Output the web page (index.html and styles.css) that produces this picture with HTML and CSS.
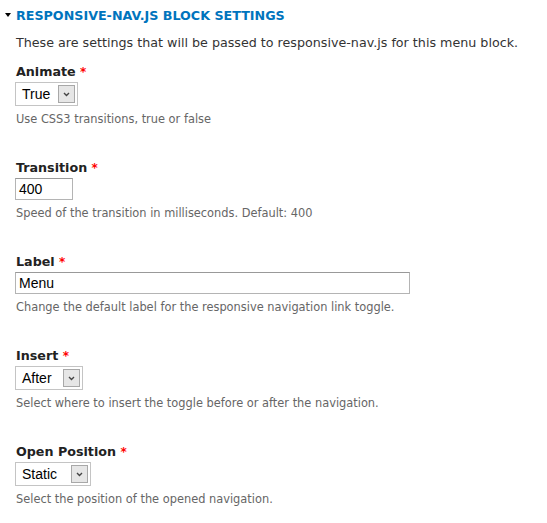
FILE: index.html
```html
<!DOCTYPE html>
<html>
<head>
<meta charset="utf-8">
<link rel="stylesheet" href="styles.css">
</head>
<body>
<div class="fieldset">
  <div class="legend"><span class="tri"></span>RESPONSIVE-NAV.JS BLOCK SETTINGS</div>
  <p class="intro">These are settings that will be passed to responsive-nav.js for this menu block.</p>

  <div class="item">
    <div class="label">Animate <span class="req">*</span></div>
    <div class="select w-true"><span class="val">True</span><span class="btn"><svg width="7" height="5" viewBox="0 0 7 5"><path d="M1 1 L3.5 3.5 L6 1" fill="none" stroke="#444" stroke-width="1.4"/></svg></span></div>
    <div class="desc">Use CSS3 transitions, true or false</div>
  </div>

  <div class="item">
    <div class="label">Transition <span class="req">*</span></div>
    <div class="input w-short">400</div>
    <div class="desc">Speed of the transition in milliseconds. Default: 400</div>
  </div>

  <div class="item">
    <div class="label">Label <span class="req">*</span></div>
    <div class="input w-long">Menu</div>
    <div class="desc">Change the default label for the responsive navigation link toggle.</div>
  </div>

  <div class="item">
    <div class="label">Insert <span class="req">*</span></div>
    <div class="select w-after"><span class="val">After</span><span class="btn"><svg width="7" height="5" viewBox="0 0 7 5"><path d="M1 1 L3.5 3.5 L6 1" fill="none" stroke="#444" stroke-width="1.4"/></svg></span></div>
    <div class="desc">Select where to insert the toggle before or after the navigation.</div>
  </div>

  <div class="item">
    <div class="label">Open Position <span class="req">*</span></div>
    <div class="select w-static"><span class="val">Static</span><span class="btn"><svg width="7" height="5" viewBox="0 0 7 5"><path d="M1 1 L3.5 3.5 L6 1" fill="none" stroke="#444" stroke-width="1.4"/></svg></span></div>
    <div class="desc">Select the position of the opened navigation.</div>
  </div>
</div>
</body>
</html>
```

FILE: styles.css
```css
html, body {
  margin: 0;
  padding: 0;
  background: #fff;
}
body {
  font-family: "DejaVu Sans", Verdana, sans-serif;
  font-size: 13px;
  color: #333;
}
.fieldset {
  padding: 7px 0 0 15px;
}
.legend {
  position: relative;
  font-weight: bold;
  color: #0074bd;
  line-height: 18px;
  height: 18px;
  padding-left: 1px;
  font-size: 12.7px;
}
.tri {
  position: absolute;
  left: -10px;
  top: 6px;
  width: 0;
  height: 0;
  border-left: 3px solid transparent;
  border-right: 3px solid transparent;
  border-top: 4px solid #000;
}
.intro {
  margin: 9px 0 11px 1px;
  line-height: 18px;
  font-size: 12.7px;
}
.item {
  margin-bottom: 32px;
}
.label {
  font-weight: bold;
  color: #222;
  line-height: 18px;
  margin-bottom: 1px;
  padding-left: 1px;
  font-size: 12.7px;
}
.req {
  color: #f00;
  font-size: 12px;
}
.select {
  display: flex;
  align-items: center;
  justify-content: space-between;
  box-sizing: border-box;
  height: 24px;
  border: 1px solid #c4c4c4;
  padding: 0 2px 0 6px;
  font-family: "Liberation Sans", Arial, sans-serif;
  font-size: 14px;
  color: #000;
}
.btn {
  display: flex;
  align-items: center;
  justify-content: center;
  box-sizing: border-box;
  width: 17px;
  height: 18px;
  background: #e6e6e6;
  border: 1px solid #a8a8a8;
}
.w-true { width: 63px; }
.w-after { width: 68px; }
.w-static { width: 76px; }
.input {
  box-sizing: border-box;
  height: 22px;
  line-height: 20px;
  border: 1px solid #b4b4b4;
  border-top-color: #999;
  padding: 0 3px;
  font-family: "Liberation Sans", Arial, sans-serif;
  font-size: 14px;
  color: #000;
}
.w-short { width: 58px; }
.w-long { width: 395px; }
.desc {
  margin-top: 5px;
  line-height: 16px;
  font-size: 11.4px;
  color: #666;
  padding-left: 1px;
}
```
